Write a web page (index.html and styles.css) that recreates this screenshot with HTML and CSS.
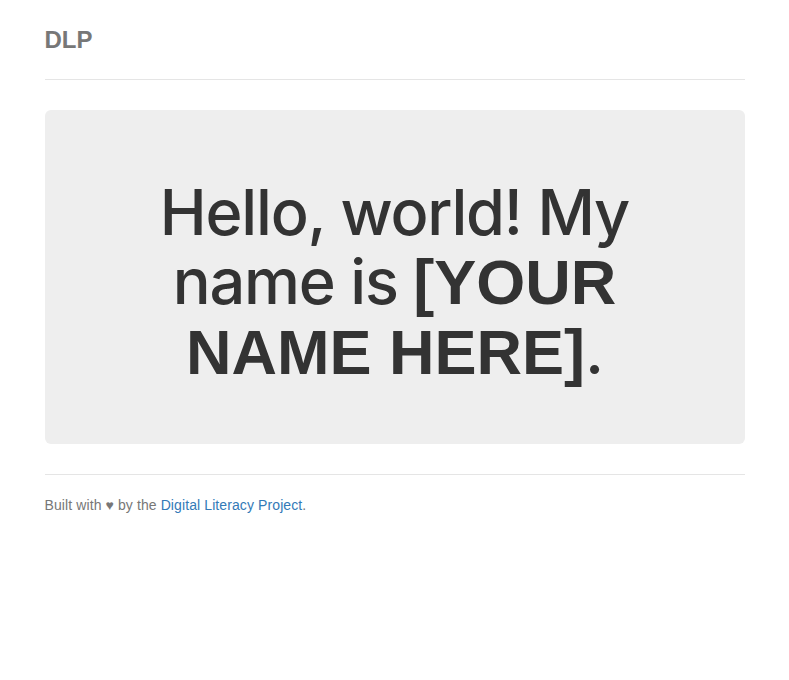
FILE: index.html
```html
<!DOCTYPE html>
<html lang="en">
<head>
<meta charset="utf-8">
<title>DLP</title>
<link rel="stylesheet" href="styles.css">
</head>
<body>
<div class="container">
  <div class="header">
    <h3 class="brand">DLP</h3>
  </div>
  <div class="jumbotron">
    <h1>Hello, world! My name is <strong>[YOUR NAME HERE]</strong>.</h1>
  </div>
  <footer class="footer">
    <p>Built with <span class="heart">&#9829;</span> by the <a href="#">Digital Literacy Project</a>.</p>
  </footer>
</div>
</body>
</html>
```
FILE: styles.css
```css
* { box-sizing: border-box; }
html, body { margin: 0; }
body {
  padding-top: 20px;
  padding-bottom: 20px;
  font-family: "Liberation Sans", Arial, Helvetica, sans-serif;
  font-size: 14px;
  line-height: 1.42857;
  color: #333;
  background: #fff;
}
.container {
  max-width: 730px;
  margin: 0 auto;
  padding: 0 15px;
}
.header {
  padding-bottom: 19px;
  border-bottom: 1px solid #e5e5e5;
  margin-bottom: 30px;
}
.brand {
  margin: 0;
  line-height: 40px;
  font-size: 24px;
  font-weight: bold;
  color: #777;
}
.jumbotron {
  background: #eee;
  border-radius: 6px;
  padding: 48px 60px;
  text-align: center;
  margin-bottom: 30px;
}
.jumbotron h1 {
  margin: 20px 0 10px;
  font-family: Inter, "Liberation Sans", sans-serif;
  font-size: 63px;
  line-height: 69.3px;
  font-weight: 500;
  letter-spacing: -1.2px;
  color: #333;
}
.jumbotron strong {
  font-family: "Liberation Sans", Arial, sans-serif;
  font-weight: bold;
  letter-spacing: 0;
  line-height: 1;
}
.footer {
  padding-top: 21px;
  border-top: 1px solid #e5e5e5;
  color: #777;
  letter-spacing: 0.1px;
}
.footer p { margin: 0 0 10px; }
.footer a { color: #337ab7; text-decoration: none; }
```
